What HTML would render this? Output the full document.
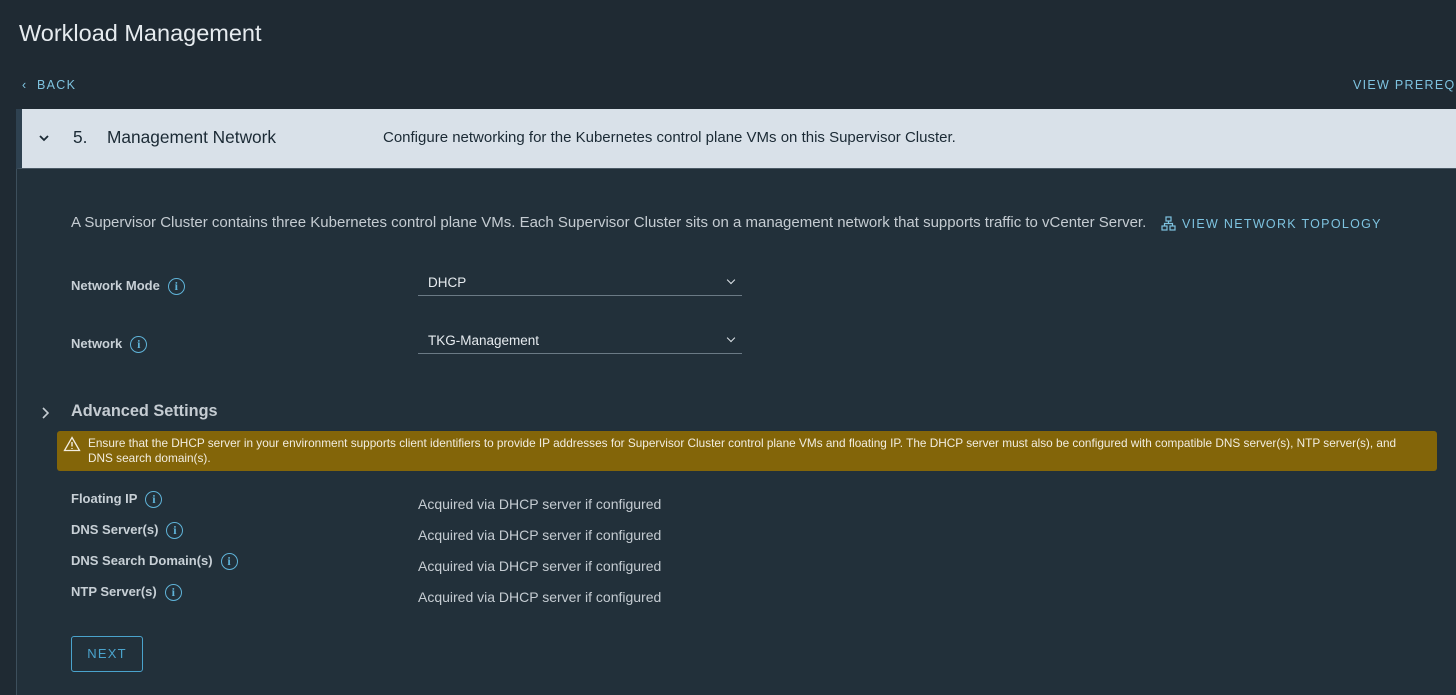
<!DOCTYPE html>
<html><head><meta charset="utf-8"><style>
*{margin:0;padding:0;box-sizing:border-box}
body{width:1456px;height:695px;overflow:hidden;background:#1f2a33;font-family:"Liberation Sans",sans-serif;position:relative;color:#dde3e8}
.a{position:absolute;white-space:nowrap}
.title{left:19px;top:20px;font-size:23.5px;color:#e6ebef}
.link{color:#7ec3e0;font-size:12.5px;letter-spacing:1.3px}
.body{position:absolute;left:16px;top:109px;width:1440px;height:586px;background:#22303a;border-left:1px solid #3d4f5c}
.hdr{position:absolute;left:16px;top:109px;width:1440px;height:60px;background:#d9e1e9;border-left:6px solid #2e4150;border-bottom:1px solid #4b5a66;color:#1b2a35}
.lbl{font-size:13px;color:#c8d0d6;font-weight:bold}
.val{font-size:14px;color:#c5ccd2}
.info{display:inline-block;width:17px;height:17px;border:1.5px solid #5fb3d8;border-radius:50%;color:#5fb3d8;font-size:12px;text-align:center;line-height:14px;font-weight:bold;vertical-align:middle;margin-left:8px;font-family:"Liberation Serif",serif}
.sel{position:absolute;left:418px;width:324px;height:26px;border-bottom:1px solid #6b7a85;font-size:13.5px;color:#e6ebef;padding:5px 10px}
.sel:after{content:"";position:absolute;right:8px;top:7px;width:5px;height:5px;border-right:1.5px solid #dde3e8;border-bottom:1.5px solid #dde3e8;transform:rotate(45deg)}
.warn{position:absolute;left:57px;top:431px;width:1380px;height:40px;background:#836509;border-radius:3px;font-size:11.8px;color:#f2ede0;padding:5px 10px 0 31px;line-height:15px}
</style></head><body>
<div class="a title">Workload Management</div>
<div class="a link" style="left:22px;top:78px">&#8249;&nbsp; BACK</div>
<div class="a link" style="left:1353px;top:78px">VIEW PREREQUISITES</div>
<div class="body"></div>
<div class="hdr">
 <svg class="a" style="left:16px;top:24px" width="12" height="10"><path d="M2 3l4 4 4-4" stroke="#1b2a35" stroke-width="1.8" fill="none"/></svg>
 <div class="a" style="left:51px;top:18px;font-size:17.3px">5.</div>
 <div class="a" style="left:85px;top:18px;font-size:17.3px">Management Network</div>
 <div class="a" style="left:361px;top:20px;font-size:15px">Configure networking for the Kubernetes control plane VMs on this Supervisor Cluster.</div>
</div>
<div class="a" style="left:71px;top:214px;font-size:15px;color:#c5ccd2">A Supervisor Cluster contains three Kubernetes control plane VMs. Each Supervisor Cluster sits on a management network that supports traffic to vCenter Server.</div>
<svg class="a" style="left:1161px;top:216px" width="15" height="15" fill="none" stroke="#7ec3e0" stroke-width="1.2"><rect x="5" y="1" width="5" height="4"/><rect x="1" y="10" width="5" height="4"/><rect x="9" y="10" width="5" height="4"/><path d="M7.5 5v2.5M3.5 10V7.5h8V10"/></svg>
<div class="a link" style="left:1182px;top:217px">VIEW NETWORK TOPOLOGY</div>
<div class="a lbl" style="left:71px;top:278px">Network Mode<span class="info">i</span></div>
<div class="sel" style="top:270px">DHCP</div>
<div class="a lbl" style="left:71px;top:336px">Network<span class="info">i</span></div>
<div class="sel" style="top:328px">TKG-Management</div>
<svg class="a" style="left:40px;top:406px" width="10" height="14"><path d="M3 2l5 5-5 5" stroke="#c5ccd2" stroke-width="1.6" fill="none"/></svg>
<div class="a" style="left:71px;top:402px;font-size:16.3px;font-weight:bold;color:#c5ccd2">Advanced Settings</div>
<div class="warn"><svg style="position:absolute;left:6px;top:5px" width="18" height="16"><path d="M9 1.5L16.5 14.5H1.5Z" fill="none" stroke="#f2ede0" stroke-width="1.3"/><path d="M9 6v4.5M9 12v1" stroke="#f2ede0" stroke-width="1.4"/></svg>Ensure that the DHCP server in your environment supports client identifiers to provide IP addresses for Supervisor Cluster control plane VMs and floating IP. The DHCP server must also be configured with compatible DNS server(s), NTP server(s), and<br>DNS search domain(s).</div>
<div class="a lbl" style="left:71px;top:491px">Floating IP<span class="info">i</span></div>
<div class="a lbl" style="left:71px;top:522px">DNS Server(s)<span class="info">i</span></div>
<div class="a lbl" style="left:71px;top:553px">DNS Search Domain(s)<span class="info">i</span></div>
<div class="a lbl" style="left:71px;top:584px">NTP Server(s)<span class="info">i</span></div>
<div class="a val" style="left:418px;top:496px">Acquired via DHCP server if configured</div>
<div class="a val" style="left:418px;top:527px">Acquired via DHCP server if configured</div>
<div class="a val" style="left:418px;top:558px">Acquired via DHCP server if configured</div>
<div class="a val" style="left:418px;top:589px">Acquired via DHCP server if configured</div>
<div class="a" style="left:71px;top:636px;width:72px;height:36px;border:1px solid #4aa3cc;border-radius:3px;color:#4aa3cc;font-size:13px;letter-spacing:1.2px;text-align:center;line-height:34px">NEXT</div>
</body></html>
